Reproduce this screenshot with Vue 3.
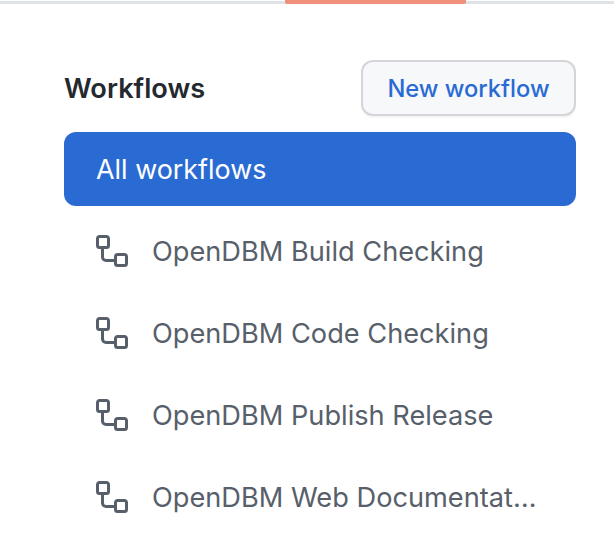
<script setup>
const items = [
  'OpenDBM Build Checking',
  'OpenDBM Code Checking',
  'OpenDBM Publish Release',
  'OpenDBM Web Documentation',
]
const d = 'M0 1.75C0 .784.784 0 1.75 0h3.5C6.216 0 7 .784 7 1.75v3.5A1.75 1.75 0 0 1 5.25 7H4v4a1 1 0 0 0 1 1h4v-1.25C9 9.784 9.784 9 10.75 9h3.5c.966 0 1.75.784 1.75 1.75v3.5A1.75 1.75 0 0 1 14.25 16h-3.5A1.75 1.75 0 0 1 9 14.25V13.5H5A2.5 2.5 0 0 1 2.5 11V7h-.75A1.75 1.75 0 0 1 0 5.25Zm1.75-.25a.25.25 0 0 0-.25.25v3.5c0 .138.112.25.25.25h3.5a.25.25 0 0 0 .25-.25v-3.5a.25.25 0 0 0-.25-.25Zm9 9a.25.25 0 0 0-.25.25v3.5c0 .138.112.25.25.25h3.5a.25.25 0 0 0 .25-.25v-3.5a.25.25 0 0 0-.25-.25Z'
</script>

<template>
  <div class="page">
    <div class="rule"><div class="accent"></div></div>
    <div class="side">
      <div class="head">
        <h2 class="title">Workflows</h2>
        <button class="btn">New workflow</button>
      </div>
      <div class="active">All workflows</div>
      <ul class="list">
        <li v-for="item in items" :key="item" class="row">
          <svg class="icon" viewBox="0 0 16 16" width="32" height="32"><path :d="d" fill="currentColor" /></svg>
          <span class="label">{{ item }}</span>
        </li>
      </ul>
    </div>
  </div>
</template>

<style>
html, body { margin: 0; background: #fff; }
</style>

<style scoped>
.page {
  width: 614px;
  height: 536px;
  overflow: hidden;
  background: #fff;
  font-family: Inter, "Liberation Sans", sans-serif;
}
.rule {
  height: 4px;
  background: linear-gradient(#fff 1.5px, #dfe3e8 1.5px);
  display: flex;
  padding-left: 285px;
  box-sizing: border-box;
}
.accent {
  width: 181px;
  height: 4px;
  background: #f09078;
  border-radius: 0 0 2px 2px;
}
.side {
  width: 512px;
  margin: 56px 0 0 64px;
}
.head {
  display: flex;
  align-items: center;
  justify-content: space-between;
  height: 56px;
  margin-bottom: 16px;
}
.title {
  margin: 0;
  padding-top: 2px;
  font-size: 27.2px;
  line-height: 54px;
  font-weight: 600;
  color: #24292f;
}
.btn {
  width: 215px;
  height: 56px;
  box-sizing: border-box;
  border: 2px solid #d3d5d8;
  border-radius: 12px;
  background: #f6f8fa;
  box-shadow: 0 2px 0 rgba(27, 31, 36, 0.04);
  color: #2a6bd3;
  font-family: inherit;
  font-size: 23.7px;
  font-weight: 500;
  padding: 0;
}
.active {
  height: 74px;
  line-height: 74px;
  border-radius: 12px;
  background: #2a6bd3;
  color: #fff;
  font-size: 26.9px;
  padding-left: 32px;
}
.list {
  list-style: none;
  margin: 4px 0 0;
  padding: 0;
}
.row {
  height: 82px;
  display: flex;
  align-items: center;
  padding-left: 32px;
  color: #57606a;
}
.icon {
  flex: none;
  margin-right: 24px;
}
.label {
  font-size: 27.2px;
  white-space: nowrap;
  overflow: hidden;
  text-overflow: ellipsis;
  width: 386px;
  line-height: 40px;
  padding-top: 2px;
}
</style>
